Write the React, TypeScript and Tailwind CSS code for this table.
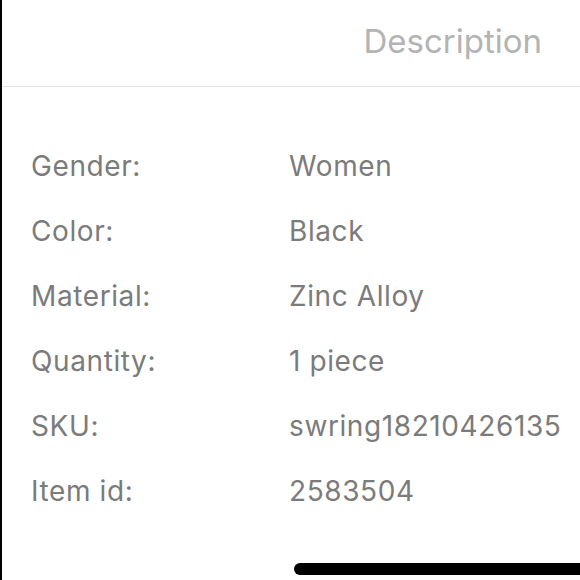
import React from 'react';

const specs: { label: string; value: string }[] = [
  { label: 'Gender:', value: 'Women' },
  { label: 'Color:', value: 'Black' },
  { label: 'Material:', value: 'Zinc Alloy' },
  { label: 'Quantity:', value: '1 piece' },
  { label: 'SKU:', value: 'swring18210426135' },
  { label: 'Item id:', value: '2583504' },
];

const App: React.FC = () => {
  return (
    <div
      className="relative h-[580px] w-[580px] overflow-hidden border-l-2 border-black bg-white"
      style={{ fontFamily: 'Inter, "Liberation Sans", Arial, sans-serif' }}
    >
      {/* Header */}
      <div className="flex h-[87px] items-start justify-end border-b border-[#e6e6e6] pr-[38px] pt-[19px]">
        <span className="text-[33px] leading-[44px] text-[#b3b3b3]">Description</span>
      </div>

      {/* Specs */}
      <div className="flex flex-col pt-[46px]">
        {specs.map((row) => (
          <div
            key={row.label}
            className="flex h-[65px] items-center text-[28px] leading-[36px] tracking-[0.6px] text-[#7b7b7b]"
          >
            <div className="w-[287px] pl-[29px]">{row.label}</div>
            <div>{row.value}</div>
          </div>
        ))}
      </div>

      {/* Home indicator */}
      <div className="absolute left-[292px] top-[563px] h-[12px] w-[320px] rounded-full bg-black" />
    </div>
  );
};

export default App;
